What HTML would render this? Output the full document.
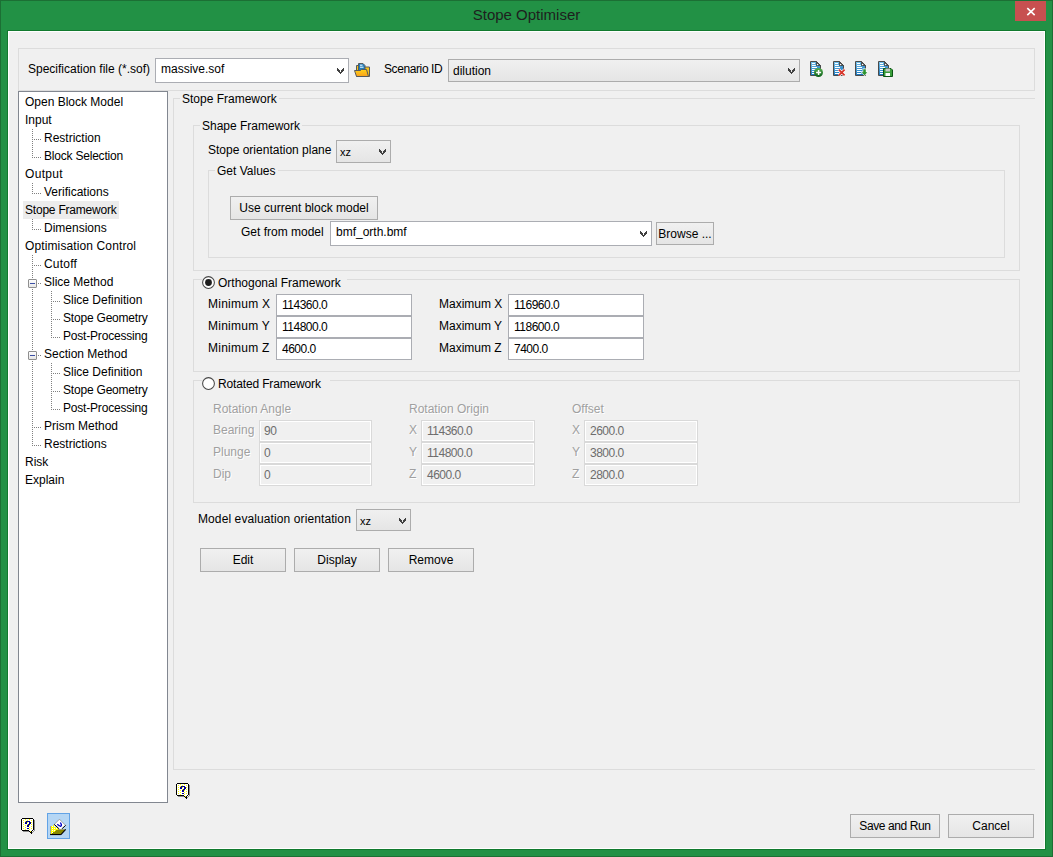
<!DOCTYPE html><html><head><meta charset="utf-8"><style>
html,body{margin:0;padding:0}
body{width:1053px;height:857px;position:relative;overflow:hidden;background:#229145;font-family:"Liberation Sans",sans-serif;font-size:12px;color:#000}
.abs{position:absolute;box-sizing:border-box}
.t{position:absolute;white-space:nowrap;font-size:12px;line-height:14px;height:14px}
.g{color:#a0a0a0;text-shadow:1px 1px 0 #fff}
.gv{color:#6d6d6d}
.num{letter-spacing:-0.5px}
.gb{position:absolute;box-sizing:border-box;border:1px solid #dcdcdc}
.gap{position:absolute;background:#f0f0f0}
.edit{background:#fff;border:1px solid #abadb3}
.edit.dis{background:#f0f0f0;border:1px solid #d9d9d9;box-shadow:inset 0 0 0 1px #fff}
.btn{border:1px solid #acacac;background:linear-gradient(#f0f0f0,#e5e5e5)}
.dv{position:absolute;width:1px;background:repeating-linear-gradient(to bottom,#808080 0 1px,transparent 1px 2px)}
.dh{position:absolute;height:1px;background:repeating-linear-gradient(to right,#808080 0 1px,transparent 1px 2px)}
</style></head><body>
<div class="abs" style="left:0;top:0;width:1053px;height:857px;border:1px solid #1c6f34"></div>
<div class="t" style="left:0;top:6px;width:1053px;text-align:center;font-size:15px;line-height:18px;height:18px;color:#1e1e1e">Stope Optimiser</div>
<div class="abs" style="left:1015px;top:1px;width:31px;height:20px;background:#c75050"></div>
<svg class="abs" style="left:1026px;top:7px" width="10" height="9" viewBox="0 0 10 9"><path d="M1.3 1.1 L8.7 8.1 M8.7 1.1 L1.3 8.1" stroke="#fff" stroke-width="1.6"/></svg>
<div class="abs" style="left:7px;top:30px;width:1039px;height:820px;border:1px solid #117a2e"></div>
<div class="abs" style="left:8px;top:31px;width:1037px;height:818px;border:1px solid #fff;background:#f0f0f0"></div>
<div class="gb" style="left:18px;top:48px;width:1017px;height:43px;"></div>
<div class="t " style="left:28px;top:62px;">Specification file (*.sof)</div>
<div class="abs edit" style="left:155px;top:58px;width:194px;height:25px"></div>
<div class="t " style="left:161px;top:62px;">massive.sof</div>
<svg class="abs" style="left:337px;top:68px" width="7" height="6" viewBox="0 0 7 6" shape-rendering="crispEdges"><g fill="#404040"><rect x="0" y="0" width="1" height="1"/><rect x="6" y="0" width="1" height="1"/><rect x="0" y="1" width="2" height="1"/><rect x="5" y="1" width="2" height="1"/><rect x="0" y="2" width="3" height="1"/><rect x="4" y="2" width="3" height="1"/><rect x="1" y="3" width="2" height="1"/><rect x="4" y="3" width="2" height="1"/><rect x="2" y="4" width="3" height="1"/><rect x="3" y="5" width="1" height="1"/></g></svg>
<svg class="abs" style="left:354px;top:62px" width="17" height="16" viewBox="0 0 17 16">
<defs><linearGradient id="fy" x1="0" y1="0" x2="0" y2="1"><stop offset="0" stop-color="#ffd21c"/><stop offset="1" stop-color="#f9a11b"/></linearGradient></defs>
<path d="M2.5 3.5 H5 V5 H15.5 V14.5 H2.5 Z" fill="#f5c21b" stroke="#565a5e" stroke-width="1"/>
<path d="M4.5 1.5 H9 L11 3.5 V8.5 H4.5 Z" fill="#1f7fc0" stroke="#565a5e" stroke-width="1"/>
<path d="M6 3.2 H8.5 M6 5.2 H9.5" stroke="#fff" stroke-width="1"/>
<path d="M0.5 8.5 H6.5 L7.5 7.5 H12.5 L14.5 14.5 H2.5 Z" fill="url(#fy)" stroke="#565a5e" stroke-width="1" stroke-linejoin="round"/>
</svg>
<div class="t " style="left:384px;top:62px;letter-spacing:-0.4px">Scenario ID</div>
<div class="abs btn" style="left:448px;top:59px;width:352px;height:23px"></div>
<div class="t " style="left:453px;top:64px;">dilution</div>
<svg class="abs" style="left:788px;top:68px" width="7" height="6" viewBox="0 0 7 6" shape-rendering="crispEdges"><g fill="#404040"><rect x="0" y="0" width="1" height="1"/><rect x="6" y="0" width="1" height="1"/><rect x="0" y="1" width="2" height="1"/><rect x="5" y="1" width="2" height="1"/><rect x="0" y="2" width="3" height="1"/><rect x="4" y="2" width="3" height="1"/><rect x="1" y="3" width="2" height="1"/><rect x="4" y="3" width="2" height="1"/><rect x="2" y="4" width="3" height="1"/><rect x="3" y="5" width="1" height="1"/></g></svg>
<svg class="abs" style="left:810px;top:61px" width="16" height="17" viewBox="0 0 16 17">
<defs><linearGradient id="db810" x1="0" y1="0" x2="0.3" y2="1"><stop offset="0" stop-color="#7cc6ee"/><stop offset="1" stop-color="#1675bd"/></linearGradient>
<linearGradient id="gc810" x1="0" y1="0" x2="0" y2="1"><stop offset="0" stop-color="#58b04f"/><stop offset="1" stop-color="#0b5e1a"/></linearGradient></defs>
<path d="M0.5 0.5 H6.5 L10.5 4.5 V14.5 H0.5 Z" fill="url(#db810)" stroke="#4a4a4a" stroke-width="1"/>
<path d="M6.5 0.5 L10.5 4.5 H6.5 Z" fill="#454545" stroke="#454545" stroke-width="0.8" stroke-linejoin="round"/>
<circle cx="7.6" cy="3.4" r="0.75" fill="#fff"/>
<path d="M2 2.5 H5 M2 4.5 H5.8 M2 6.5 H7 M2 8.5 H7 M2 10.5 H6.5 M2 12.5 H6.5" stroke="#fff" stroke-width="1"/><circle cx="8.5" cy="11.5" r="4.5" fill="url(#gc810)"/><path d="M8.6 9 V14 M6.1 11.5 H11.1" stroke="#fff" stroke-width="1.5"/></svg>
<svg class="abs" style="left:833px;top:61px" width="16" height="17" viewBox="0 0 16 17">
<defs><linearGradient id="db833" x1="0" y1="0" x2="0.3" y2="1"><stop offset="0" stop-color="#7cc6ee"/><stop offset="1" stop-color="#1675bd"/></linearGradient>
<linearGradient id="gc833" x1="0" y1="0" x2="0" y2="1"><stop offset="0" stop-color="#58b04f"/><stop offset="1" stop-color="#0b5e1a"/></linearGradient></defs>
<path d="M0.5 0.5 H6.5 L10.5 4.5 V14.5 H0.5 Z" fill="url(#db833)" stroke="#4a4a4a" stroke-width="1"/>
<path d="M6.5 0.5 L10.5 4.5 H6.5 Z" fill="#454545" stroke="#454545" stroke-width="0.8" stroke-linejoin="round"/>
<circle cx="7.6" cy="3.4" r="0.75" fill="#fff"/>
<path d="M2 2.5 H5 M2 4.5 H5.8 M2 6.5 H7 M2 8.5 H7 M2 10.5 H6.5 M2 12.5 H6.5" stroke="#fff" stroke-width="1"/><path d="M5.8 8.6 L11.6 14.4 M11.6 8.6 L5.8 14.4" stroke="#fff" stroke-width="3"/><path d="M5.8 8.6 L11.6 14.4 M11.6 8.6 L5.8 14.4" stroke="#d8352a" stroke-width="1.8"/></svg>
<svg class="abs" style="left:855px;top:61px" width="16" height="17" viewBox="0 0 16 17">
<defs><linearGradient id="db855" x1="0" y1="0" x2="0.3" y2="1"><stop offset="0" stop-color="#7cc6ee"/><stop offset="1" stop-color="#1675bd"/></linearGradient>
<linearGradient id="gc855" x1="0" y1="0" x2="0" y2="1"><stop offset="0" stop-color="#58b04f"/><stop offset="1" stop-color="#0b5e1a"/></linearGradient></defs>
<path d="M0.5 0.5 H6.5 L10.5 4.5 V14.5 H0.5 Z" fill="url(#db855)" stroke="#4a4a4a" stroke-width="1"/>
<path d="M6.5 0.5 L10.5 4.5 H6.5 Z" fill="#454545" stroke="#454545" stroke-width="0.8" stroke-linejoin="round"/>
<circle cx="7.6" cy="3.4" r="0.75" fill="#fff"/>
<path d="M2 2.5 H5 M2 4.5 H5.8 M2 6.5 H7 M2 8.5 H7 M2 10.5 H6.5 M2 12.5 H6.5" stroke="#fff" stroke-width="1"/><path d="M7.6 7.6 H11.4 V10.6 H13.6 L9.5 15 L5.4 10.6 H7.6 Z" fill="#fff"/><path d="M8.2 8.2 H10.8 V11.2 H12.4 L9.5 14.3 L6.6 11.2 H8.2 Z" fill="#2b932e"/></svg>
<svg class="abs" style="left:878px;top:61px" width="16" height="17" viewBox="0 0 16 17">
<defs><linearGradient id="db878" x1="0" y1="0" x2="0.3" y2="1"><stop offset="0" stop-color="#7cc6ee"/><stop offset="1" stop-color="#1675bd"/></linearGradient>
<linearGradient id="gc878" x1="0" y1="0" x2="0" y2="1"><stop offset="0" stop-color="#58b04f"/><stop offset="1" stop-color="#0b5e1a"/></linearGradient></defs>
<path d="M0.5 0.5 H6.5 L10.5 4.5 V14.5 H0.5 Z" fill="url(#db878)" stroke="#4a4a4a" stroke-width="1"/>
<path d="M6.5 0.5 L10.5 4.5 H6.5 Z" fill="#454545" stroke="#454545" stroke-width="0.8" stroke-linejoin="round"/>
<circle cx="7.6" cy="3.4" r="0.75" fill="#fff"/>
<path d="M2 2.5 H5 M2 4.5 H5.8 M2 6.5 H7 M2 8.5 H7 M2 10.5 H6.5 M2 12.5 H6.5" stroke="#fff" stroke-width="1"/><path d="M5.5 7.5 H13 L14.5 9 V15.5 H5.5 Z" fill="#3a9e3a" stroke="#0b5414" stroke-width="1"/><rect x="7.5" y="7.5" width="4.5" height="3" fill="#c8c8c8"/><rect x="7.5" y="12" width="4.5" height="3" fill="#fff"/></svg>
<div class="abs" style="left:18px;top:91px;width:150px;height:712px;border:1px solid #828790;background:#fff"></div>
<div class="abs" style="left:23px;top:201px;width:96px;height:18px;background:#ececec"></div>
<div class="t " style="left:25px;top:95px;">Open Block Model</div>
<div class="t " style="left:25px;top:113px;">Input</div>
<div class="t " style="left:44px;top:131px;">Restriction</div>
<div class="t " style="left:44px;top:149px;letter-spacing:-0.21px">Block Selection</div>
<div class="t " style="left:25px;top:167px;letter-spacing:0.33px">Output</div>
<div class="t " style="left:44px;top:185px;">Verifications</div>
<div class="t " style="left:25px;top:203px;letter-spacing:-0.21px">Stope Framework</div>
<div class="t " style="left:44px;top:221px;">Dimensions</div>
<div class="t " style="left:25px;top:239px;letter-spacing:0.12px">Optimisation Control</div>
<div class="t " style="left:44px;top:257px;letter-spacing:0.2px">Cutoff</div>
<div class="t " style="left:44px;top:275px;">Slice Method</div>
<div class="t " style="left:63px;top:293px;">Slice Definition</div>
<div class="t " style="left:63px;top:311px;letter-spacing:-0.2px">Stope Geometry</div>
<div class="t " style="left:63px;top:329px;letter-spacing:-0.19px">Post-Processing</div>
<div class="t " style="left:44px;top:347px;">Section Method</div>
<div class="t " style="left:63px;top:365px;">Slice Definition</div>
<div class="t " style="left:63px;top:383px;letter-spacing:-0.2px">Stope Geometry</div>
<div class="t " style="left:63px;top:401px;letter-spacing:-0.19px">Post-Processing</div>
<div class="t " style="left:44px;top:419px;">Prism Method</div>
<div class="t " style="left:44px;top:437px;">Restrictions</div>
<div class="t " style="left:25px;top:455px;">Risk</div>
<div class="t " style="left:25px;top:473px;">Explain</div>
<div class="dv" style="left:32px;top:129px;height:29px"></div>
<div class="dh" style="left:32px;top:139px;width:9px"></div>
<div class="dh" style="left:32px;top:157px;width:9px"></div>
<div class="dv" style="left:32px;top:183px;height:11px"></div>
<div class="dh" style="left:32px;top:193px;width:9px"></div>
<div class="dv" style="left:32px;top:219px;height:11px"></div>
<div class="dh" style="left:32px;top:229px;width:9px"></div>
<div class="dv" style="left:32px;top:255px;height:191px"></div>
<div class="dh" style="left:32px;top:265px;width:9px"></div>
<div class="dh" style="left:32px;top:283px;width:9px"></div>
<div class="dh" style="left:32px;top:355px;width:9px"></div>
<div class="dh" style="left:32px;top:427px;width:9px"></div>
<div class="dh" style="left:32px;top:445px;width:9px"></div>
<div class="dv" style="left:51px;top:291px;height:47px"></div>
<div class="dh" style="left:51px;top:301px;width:9px"></div>
<div class="dh" style="left:51px;top:319px;width:9px"></div>
<div class="dh" style="left:51px;top:337px;width:9px"></div>
<div class="dv" style="left:51px;top:363px;height:47px"></div>
<div class="dh" style="left:51px;top:373px;width:9px"></div>
<div class="dh" style="left:51px;top:391px;width:9px"></div>
<div class="dh" style="left:51px;top:409px;width:9px"></div>
<div class="abs" style="left:28px;top:279px;width:9px;height:9px;border:1px solid #8f8f8f;border-radius:1px;background:linear-gradient(#fdfdfd,#e6e6e6)"></div>
<div class="abs" style="left:30px;top:283px;width:5px;height:1px;background:#3b4fa5"></div>
<div class="abs" style="left:28px;top:351px;width:9px;height:9px;border:1px solid #8f8f8f;border-radius:1px;background:linear-gradient(#fdfdfd,#e6e6e6)"></div>
<div class="abs" style="left:30px;top:355px;width:5px;height:1px;background:#3b4fa5"></div>
<div class="gb" style="left:173px;top:98px;width:862px;height:672px;border-right:none;"></div>
<div class="gap" style="left:180px;top:96px;width:99px;height:5px"></div>
<div class="t " style="left:182px;top:92px;">Stope Framework</div>
<div class="gb" style="left:193px;top:125px;width:827px;height:146px;"></div>
<div class="gap" style="left:200px;top:123px;width:102px;height:5px"></div>
<div class="t " style="left:202px;top:119px;">Shape Framework</div>
<div class="t " style="left:208px;top:143px;">Stope orientation plane</div>
<div class="abs btn" style="left:336px;top:140px;width:55px;height:23px"></div>
<div class="t " style="left:340px;top:145px;"><span style="font-size:11px">xz</span></div>
<svg class="abs" style="left:379px;top:149px" width="7" height="6" viewBox="0 0 7 6" shape-rendering="crispEdges"><g fill="#404040"><rect x="0" y="0" width="1" height="1"/><rect x="6" y="0" width="1" height="1"/><rect x="0" y="1" width="2" height="1"/><rect x="5" y="1" width="2" height="1"/><rect x="0" y="2" width="3" height="1"/><rect x="4" y="2" width="3" height="1"/><rect x="1" y="3" width="2" height="1"/><rect x="4" y="3" width="2" height="1"/><rect x="2" y="4" width="3" height="1"/><rect x="3" y="5" width="1" height="1"/></g></svg>
<div class="gb" style="left:208px;top:170px;width:797px;height:88px;"></div>
<div class="gap" style="left:215px;top:168px;width:63px;height:5px"></div>
<div class="t " style="left:217px;top:164px;">Get Values</div>
<div class="abs btn" style="left:230px;top:196px;width:148px;height:24px"></div>
<div class="t" style="left:230px;top:201px;width:148px;text-align:center">Use current block model</div>
<div class="t " style="left:241px;top:225px;">Get from model</div>
<div class="abs edit" style="left:330px;top:221px;width:322px;height:25px"></div>
<div class="t " style="left:336px;top:225px;">bmf_orth.bmf</div>
<svg class="abs" style="left:640px;top:231px" width="7" height="6" viewBox="0 0 7 6" shape-rendering="crispEdges"><g fill="#404040"><rect x="0" y="0" width="1" height="1"/><rect x="6" y="0" width="1" height="1"/><rect x="0" y="1" width="2" height="1"/><rect x="5" y="1" width="2" height="1"/><rect x="0" y="2" width="3" height="1"/><rect x="4" y="2" width="3" height="1"/><rect x="1" y="3" width="2" height="1"/><rect x="4" y="3" width="2" height="1"/><rect x="2" y="4" width="3" height="1"/><rect x="3" y="5" width="1" height="1"/></g></svg>
<div class="abs btn" style="left:656px;top:222px;width:58px;height:23px"></div>
<div class="t" style="left:656px;top:227px;width:58px;text-align:center">Browse ...</div>
<div class="gb" style="left:193px;top:279px;width:827px;height:93px;"></div>
<div class="gap" style="left:202px;top:277px;width:145px;height:5px"></div>
<svg class="abs" style="left:202px;top:276px" width="13" height="13" viewBox="0 0 13 13"><circle cx="6.5" cy="6.5" r="5.9" fill="#fff" stroke="#464646" stroke-width="1.05"/><circle cx="6.5" cy="6.5" r="3.4" fill="#1e1e1e"/></svg>
<div class="t " style="left:218px;top:276px;">Orthogonal Framework</div>
<div class="t " style="left:208px;top:297px;letter-spacing:0.25px">Minimum X</div>
<div class="abs edit" style="left:276px;top:294px;width:136px;height:22px"></div>
<div class="t num" style="left:282px;top:298px;">114360.0</div>
<div class="t " style="left:439px;top:297px;">Maximum X</div>
<div class="abs edit" style="left:508px;top:294px;width:136px;height:22px"></div>
<div class="t num" style="left:514px;top:298px;">116960.0</div>
<div class="t " style="left:208px;top:319px;letter-spacing:0.25px">Minimum Y</div>
<div class="abs edit" style="left:276px;top:316px;width:136px;height:22px"></div>
<div class="t num" style="left:282px;top:320px;">114800.0</div>
<div class="t " style="left:439px;top:319px;">Maximum Y</div>
<div class="abs edit" style="left:508px;top:316px;width:136px;height:22px"></div>
<div class="t num" style="left:514px;top:320px;">118600.0</div>
<div class="t " style="left:208px;top:341px;letter-spacing:0.25px">Minimum Z</div>
<div class="abs edit" style="left:276px;top:338px;width:136px;height:22px"></div>
<div class="t num" style="left:282px;top:342px;">4600.0</div>
<div class="t " style="left:439px;top:341px;">Maximum Z</div>
<div class="abs edit" style="left:508px;top:338px;width:136px;height:22px"></div>
<div class="t num" style="left:514px;top:342px;">7400.0</div>
<div class="gb" style="left:193px;top:380px;width:827px;height:123px;"></div>
<div class="gap" style="left:202px;top:378px;width:128px;height:5px"></div>
<svg class="abs" style="left:202px;top:377px" width="13" height="13" viewBox="0 0 13 13"><circle cx="6.5" cy="6.5" r="5.9" fill="#fff" stroke="#464646" stroke-width="1.05"/></svg>
<div class="t " style="left:218px;top:377px;letter-spacing:-0.15px">Rotated Framework</div>
<div class="t g" style="left:213px;top:402px;">Rotation Angle</div>
<div class="t g" style="left:409px;top:402px;">Rotation Origin</div>
<div class="t g" style="left:572px;top:402px;">Offset</div>
<div class="t g" style="left:213px;top:423px;">Bearing</div>
<div class="abs edit dis" style="left:259px;top:420px;width:113px;height:22px"></div>
<div class="t gv num" style="left:264px;top:424px;">90</div>
<div class="t g" style="left:409px;top:423px;">X</div>
<div class="abs edit dis" style="left:421px;top:420px;width:114px;height:22px"></div>
<div class="t gv num" style="left:427px;top:424px;">114360.0</div>
<div class="t g" style="left:572px;top:423px;">X</div>
<div class="abs edit dis" style="left:584px;top:420px;width:114px;height:22px"></div>
<div class="t gv num" style="left:590px;top:424px;">2600.0</div>
<div class="t g" style="left:213px;top:445px;">Plunge</div>
<div class="abs edit dis" style="left:259px;top:442px;width:113px;height:22px"></div>
<div class="t gv num" style="left:264px;top:446px;">0</div>
<div class="t g" style="left:409px;top:445px;">Y</div>
<div class="abs edit dis" style="left:421px;top:442px;width:114px;height:22px"></div>
<div class="t gv num" style="left:427px;top:446px;">114800.0</div>
<div class="t g" style="left:572px;top:445px;">Y</div>
<div class="abs edit dis" style="left:584px;top:442px;width:114px;height:22px"></div>
<div class="t gv num" style="left:590px;top:446px;">3800.0</div>
<div class="t g" style="left:213px;top:467px;">Dip</div>
<div class="abs edit dis" style="left:259px;top:464px;width:113px;height:22px"></div>
<div class="t gv num" style="left:264px;top:468px;">0</div>
<div class="t g" style="left:409px;top:467px;">Z</div>
<div class="abs edit dis" style="left:421px;top:464px;width:114px;height:22px"></div>
<div class="t gv num" style="left:427px;top:468px;">4600.0</div>
<div class="t g" style="left:572px;top:467px;">Z</div>
<div class="abs edit dis" style="left:584px;top:464px;width:114px;height:22px"></div>
<div class="t gv num" style="left:590px;top:468px;">2800.0</div>
<div class="t " style="left:198px;top:512px;letter-spacing:0.1px">Model evaluation orientation</div>
<div class="abs btn" style="left:356px;top:509px;width:55px;height:22px"></div>
<div class="t " style="left:360px;top:514px;"><span style="font-size:11px">xz</span></div>
<svg class="abs" style="left:399px;top:518px" width="7" height="6" viewBox="0 0 7 6" shape-rendering="crispEdges"><g fill="#404040"><rect x="0" y="0" width="1" height="1"/><rect x="6" y="0" width="1" height="1"/><rect x="0" y="1" width="2" height="1"/><rect x="5" y="1" width="2" height="1"/><rect x="0" y="2" width="3" height="1"/><rect x="4" y="2" width="3" height="1"/><rect x="1" y="3" width="2" height="1"/><rect x="4" y="3" width="2" height="1"/><rect x="2" y="4" width="3" height="1"/><rect x="3" y="5" width="1" height="1"/></g></svg>
<div class="abs btn" style="left:200px;top:548px;width:86px;height:24px"></div>
<div class="t" style="left:200px;top:553px;width:86px;text-align:center">Edit</div>
<div class="abs btn" style="left:294px;top:548px;width:86px;height:24px"></div>
<div class="t" style="left:294px;top:553px;width:86px;text-align:center">Display</div>
<div class="abs btn" style="left:388px;top:548px;width:86px;height:24px"></div>
<div class="t" style="left:388px;top:553px;width:86px;text-align:center">Remove</div>
<svg class="abs" style="left:176px;top:783px" width="14" height="17" viewBox="0 0 14 17" shape-rendering="crispEdges"><rect x="1" y="1" width="1" height="1" fill="#fff"/><rect x="2" y="1" width="1" height="1" fill="#fff"/><rect x="3" y="1" width="1" height="1" fill="#fff"/><rect x="4" y="1" width="1" height="1" fill="#ffff00"/><rect x="5" y="1" width="1" height="1" fill="#fff"/><rect x="6" y="1" width="1" height="1" fill="#fff"/><rect x="7" y="1" width="1" height="1" fill="#fff"/><rect x="8" y="1" width="1" height="1" fill="#ffff00"/><rect x="9" y="1" width="1" height="1" fill="#fff"/><rect x="10" y="1" width="1" height="1" fill="#fff"/><rect x="11" y="1" width="1" height="1" fill="#fff"/><rect x="1" y="2" width="1" height="1" fill="#fff"/><rect x="2" y="2" width="1" height="1" fill="#ffff00"/><rect x="3" y="2" width="1" height="1" fill="#fff"/><rect x="4" y="2" width="1" height="1" fill="#fff"/><rect x="5" y="2" width="1" height="1" fill="#fff"/><rect x="6" y="2" width="1" height="1" fill="#ffff00"/><rect x="7" y="2" width="1" height="1" fill="#fff"/><rect x="8" y="2" width="1" height="1" fill="#fff"/><rect x="9" y="2" width="1" height="1" fill="#fff"/><rect x="10" y="2" width="1" height="1" fill="#ffff00"/><rect x="11" y="2" width="1" height="1" fill="#fff"/><rect x="1" y="3" width="1" height="1" fill="#fff"/><rect x="2" y="3" width="1" height="1" fill="#fff"/><rect x="3" y="3" width="1" height="1" fill="#fff"/><rect x="4" y="3" width="1" height="1" fill="#ffff00"/><rect x="5" y="3" width="1" height="1" fill="#00008c"/><rect x="6" y="3" width="1" height="1" fill="#00008c"/><rect x="7" y="3" width="1" height="1" fill="#00008c"/><rect x="8" y="3" width="1" height="1" fill="#00008c"/><rect x="9" y="3" width="1" height="1" fill="#fff"/><rect x="10" y="3" width="1" height="1" fill="#fff"/><rect x="11" y="3" width="1" height="1" fill="#fff"/><rect x="1" y="4" width="1" height="1" fill="#fff"/><rect x="2" y="4" width="1" height="1" fill="#ffff00"/><rect x="3" y="4" width="1" height="1" fill="#fff"/><rect x="4" y="4" width="1" height="1" fill="#00008c"/><rect x="5" y="4" width="1" height="1" fill="#00008c"/><rect x="6" y="4" width="1" height="1" fill="#ffff00"/><rect x="7" y="4" width="1" height="1" fill="#fff"/><rect x="8" y="4" width="1" height="1" fill="#00008c"/><rect x="9" y="4" width="1" height="1" fill="#00008c"/><rect x="10" y="4" width="1" height="1" fill="#ffff00"/><rect x="11" y="4" width="1" height="1" fill="#fff"/><rect x="1" y="5" width="1" height="1" fill="#fff"/><rect x="2" y="5" width="1" height="1" fill="#fff"/><rect x="3" y="5" width="1" height="1" fill="#fff"/><rect x="4" y="5" width="1" height="1" fill="#00008c"/><rect x="5" y="5" width="1" height="1" fill="#00008c"/><rect x="6" y="5" width="1" height="1" fill="#fff"/><rect x="7" y="5" width="1" height="1" fill="#fff"/><rect x="8" y="5" width="1" height="1" fill="#00008c"/><rect x="9" y="5" width="1" height="1" fill="#00008c"/><rect x="10" y="5" width="1" height="1" fill="#fff"/><rect x="11" y="5" width="1" height="1" fill="#fff"/><rect x="1" y="6" width="1" height="1" fill="#fff"/><rect x="2" y="6" width="1" height="1" fill="#ffff00"/><rect x="3" y="6" width="1" height="1" fill="#fff"/><rect x="4" y="6" width="1" height="1" fill="#fff"/><rect x="5" y="6" width="1" height="1" fill="#fff"/><rect x="6" y="6" width="1" height="1" fill="#ffff00"/><rect x="7" y="6" width="1" height="1" fill="#00008c"/><rect x="8" y="6" width="1" height="1" fill="#00008c"/><rect x="9" y="6" width="1" height="1" fill="#fff"/><rect x="10" y="6" width="1" height="1" fill="#ffff00"/><rect x="11" y="6" width="1" height="1" fill="#fff"/><rect x="1" y="7" width="1" height="1" fill="#fff"/><rect x="2" y="7" width="1" height="1" fill="#fff"/><rect x="3" y="7" width="1" height="1" fill="#fff"/><rect x="4" y="7" width="1" height="1" fill="#ffff00"/><rect x="5" y="7" width="1" height="1" fill="#fff"/><rect x="6" y="7" width="1" height="1" fill="#00008c"/><rect x="7" y="7" width="1" height="1" fill="#00008c"/><rect x="8" y="7" width="1" height="1" fill="#ffff00"/><rect x="9" y="7" width="1" height="1" fill="#fff"/><rect x="10" y="7" width="1" height="1" fill="#fff"/><rect x="11" y="7" width="1" height="1" fill="#fff"/><rect x="1" y="8" width="1" height="1" fill="#fff"/><rect x="2" y="8" width="1" height="1" fill="#ffff00"/><rect x="3" y="8" width="1" height="1" fill="#fff"/><rect x="4" y="8" width="1" height="1" fill="#fff"/><rect x="5" y="8" width="1" height="1" fill="#fff"/><rect x="6" y="8" width="1" height="1" fill="#00008c"/><rect x="7" y="8" width="1" height="1" fill="#00008c"/><rect x="8" y="8" width="1" height="1" fill="#fff"/><rect x="9" y="8" width="1" height="1" fill="#fff"/><rect x="10" y="8" width="1" height="1" fill="#ffff00"/><rect x="11" y="8" width="1" height="1" fill="#fff"/><rect x="1" y="9" width="1" height="1" fill="#fff"/><rect x="2" y="9" width="1" height="1" fill="#fff"/><rect x="3" y="9" width="1" height="1" fill="#fff"/><rect x="4" y="9" width="1" height="1" fill="#ffff00"/><rect x="5" y="9" width="1" height="1" fill="#fff"/><rect x="6" y="9" width="1" height="1" fill="#fff"/><rect x="7" y="9" width="1" height="1" fill="#fff"/><rect x="8" y="9" width="1" height="1" fill="#ffff00"/><rect x="9" y="9" width="1" height="1" fill="#fff"/><rect x="10" y="9" width="1" height="1" fill="#fff"/><rect x="11" y="9" width="1" height="1" fill="#fff"/><rect x="1" y="10" width="1" height="1" fill="#fff"/><rect x="2" y="10" width="1" height="1" fill="#ffff00"/><rect x="3" y="10" width="1" height="1" fill="#fff"/><rect x="4" y="10" width="1" height="1" fill="#fff"/><rect x="5" y="10" width="1" height="1" fill="#fff"/><rect x="6" y="10" width="1" height="1" fill="#00008c"/><rect x="7" y="10" width="1" height="1" fill="#00008c"/><rect x="8" y="10" width="1" height="1" fill="#fff"/><rect x="9" y="10" width="1" height="1" fill="#fff"/><rect x="10" y="10" width="1" height="1" fill="#ffff00"/><rect x="11" y="10" width="1" height="1" fill="#fff"/><rect x="1" y="11" width="1" height="1" fill="#fff"/><rect x="2" y="11" width="1" height="1" fill="#fff"/><rect x="3" y="11" width="1" height="1" fill="#fff"/><rect x="4" y="11" width="1" height="1" fill="#ffff00"/><rect x="5" y="11" width="1" height="1" fill="#fff"/><rect x="6" y="11" width="1" height="1" fill="#fff"/><rect x="7" y="11" width="1" height="1" fill="#fff"/><rect x="8" y="11" width="1" height="1" fill="#ffff00"/><rect x="9" y="11" width="1" height="1" fill="#fff"/><rect x="10" y="11" width="1" height="1" fill="#fff"/><rect x="11" y="11" width="1" height="1" fill="#fff"/><rect x="8" y="12" width="1" height="1" fill="#fff"/><rect x="9" y="12" width="1" height="1" fill="#fff"/><rect x="10" y="12" width="1" height="1" fill="#fff"/><rect x="9" y="13" width="1" height="1" fill="#ffff00"/><rect x="13" y="2" width="1" height="1" fill="#8c8c8c"/><rect x="13" y="3" width="1" height="1" fill="#8c8c8c"/><rect x="13" y="4" width="1" height="1" fill="#8c8c8c"/><rect x="13" y="5" width="1" height="1" fill="#8c8c8c"/><rect x="13" y="6" width="1" height="1" fill="#8c8c8c"/><rect x="13" y="7" width="1" height="1" fill="#8c8c8c"/><rect x="13" y="8" width="1" height="1" fill="#8c8c8c"/><rect x="13" y="9" width="1" height="1" fill="#8c8c8c"/><rect x="13" y="10" width="1" height="1" fill="#8c8c8c"/><rect x="13" y="11" width="1" height="1" fill="#8c8c8c"/><rect x="13" y="12" width="1" height="1" fill="#8c8c8c"/><rect x="2" y="13" width="1" height="1" fill="#8c8c8c"/><rect x="3" y="13" width="1" height="1" fill="#8c8c8c"/><rect x="4" y="13" width="1" height="1" fill="#8c8c8c"/><rect x="5" y="13" width="1" height="1" fill="#8c8c8c"/><rect x="6" y="13" width="1" height="1" fill="#8c8c8c"/><rect x="7" y="13" width="1" height="1" fill="#8c8c8c"/><rect x="11" y="14" width="1" height="1" fill="#8c8c8c"/><rect x="12" y="13" width="1" height="1" fill="#8c8c8c"/><rect x="1" y="0" width="1" height="1" fill="#000"/><rect x="2" y="0" width="1" height="1" fill="#000"/><rect x="3" y="0" width="1" height="1" fill="#000"/><rect x="4" y="0" width="1" height="1" fill="#000"/><rect x="5" y="0" width="1" height="1" fill="#000"/><rect x="6" y="0" width="1" height="1" fill="#000"/><rect x="7" y="0" width="1" height="1" fill="#000"/><rect x="8" y="0" width="1" height="1" fill="#000"/><rect x="9" y="0" width="1" height="1" fill="#000"/><rect x="10" y="0" width="1" height="1" fill="#000"/><rect x="11" y="0" width="1" height="1" fill="#000"/><rect x="0" y="1" width="1" height="1" fill="#000"/><rect x="12" y="1" width="1" height="1" fill="#000"/><rect x="0" y="2" width="1" height="1" fill="#000"/><rect x="12" y="2" width="1" height="1" fill="#000"/><rect x="0" y="3" width="1" height="1" fill="#000"/><rect x="12" y="3" width="1" height="1" fill="#000"/><rect x="0" y="4" width="1" height="1" fill="#000"/><rect x="12" y="4" width="1" height="1" fill="#000"/><rect x="0" y="5" width="1" height="1" fill="#000"/><rect x="12" y="5" width="1" height="1" fill="#000"/><rect x="0" y="6" width="1" height="1" fill="#000"/><rect x="12" y="6" width="1" height="1" fill="#000"/><rect x="0" y="7" width="1" height="1" fill="#000"/><rect x="12" y="7" width="1" height="1" fill="#000"/><rect x="0" y="8" width="1" height="1" fill="#000"/><rect x="12" y="8" width="1" height="1" fill="#000"/><rect x="0" y="9" width="1" height="1" fill="#000"/><rect x="12" y="9" width="1" height="1" fill="#000"/><rect x="0" y="10" width="1" height="1" fill="#000"/><rect x="12" y="10" width="1" height="1" fill="#000"/><rect x="0" y="11" width="1" height="1" fill="#000"/><rect x="12" y="11" width="1" height="1" fill="#000"/><rect x="1" y="12" width="1" height="1" fill="#000"/><rect x="2" y="12" width="1" height="1" fill="#000"/><rect x="3" y="12" width="1" height="1" fill="#000"/><rect x="4" y="12" width="1" height="1" fill="#000"/><rect x="5" y="12" width="1" height="1" fill="#000"/><rect x="6" y="12" width="1" height="1" fill="#000"/><rect x="7" y="12" width="1" height="1" fill="#000"/><rect x="11" y="12" width="1" height="1" fill="#000"/><rect x="8" y="13" width="1" height="1" fill="#000"/><rect x="10" y="13" width="1" height="1" fill="#000"/><rect x="9" y="14" width="1" height="1" fill="#000"/><rect x="10" y="14" width="1" height="1" fill="#000"/><rect x="10" y="15" width="1" height="1" fill="#000"/></svg>
<svg class="abs" style="left:21px;top:818px" width="14" height="17" viewBox="0 0 14 17" shape-rendering="crispEdges"><rect x="1" y="1" width="1" height="1" fill="#fff"/><rect x="2" y="1" width="1" height="1" fill="#fff"/><rect x="3" y="1" width="1" height="1" fill="#fff"/><rect x="4" y="1" width="1" height="1" fill="#ffff00"/><rect x="5" y="1" width="1" height="1" fill="#fff"/><rect x="6" y="1" width="1" height="1" fill="#fff"/><rect x="7" y="1" width="1" height="1" fill="#fff"/><rect x="8" y="1" width="1" height="1" fill="#ffff00"/><rect x="9" y="1" width="1" height="1" fill="#fff"/><rect x="10" y="1" width="1" height="1" fill="#fff"/><rect x="11" y="1" width="1" height="1" fill="#fff"/><rect x="1" y="2" width="1" height="1" fill="#fff"/><rect x="2" y="2" width="1" height="1" fill="#ffff00"/><rect x="3" y="2" width="1" height="1" fill="#fff"/><rect x="4" y="2" width="1" height="1" fill="#fff"/><rect x="5" y="2" width="1" height="1" fill="#fff"/><rect x="6" y="2" width="1" height="1" fill="#ffff00"/><rect x="7" y="2" width="1" height="1" fill="#fff"/><rect x="8" y="2" width="1" height="1" fill="#fff"/><rect x="9" y="2" width="1" height="1" fill="#fff"/><rect x="10" y="2" width="1" height="1" fill="#ffff00"/><rect x="11" y="2" width="1" height="1" fill="#fff"/><rect x="1" y="3" width="1" height="1" fill="#fff"/><rect x="2" y="3" width="1" height="1" fill="#fff"/><rect x="3" y="3" width="1" height="1" fill="#fff"/><rect x="4" y="3" width="1" height="1" fill="#ffff00"/><rect x="5" y="3" width="1" height="1" fill="#00008c"/><rect x="6" y="3" width="1" height="1" fill="#00008c"/><rect x="7" y="3" width="1" height="1" fill="#00008c"/><rect x="8" y="3" width="1" height="1" fill="#00008c"/><rect x="9" y="3" width="1" height="1" fill="#fff"/><rect x="10" y="3" width="1" height="1" fill="#fff"/><rect x="11" y="3" width="1" height="1" fill="#fff"/><rect x="1" y="4" width="1" height="1" fill="#fff"/><rect x="2" y="4" width="1" height="1" fill="#ffff00"/><rect x="3" y="4" width="1" height="1" fill="#fff"/><rect x="4" y="4" width="1" height="1" fill="#00008c"/><rect x="5" y="4" width="1" height="1" fill="#00008c"/><rect x="6" y="4" width="1" height="1" fill="#ffff00"/><rect x="7" y="4" width="1" height="1" fill="#fff"/><rect x="8" y="4" width="1" height="1" fill="#00008c"/><rect x="9" y="4" width="1" height="1" fill="#00008c"/><rect x="10" y="4" width="1" height="1" fill="#ffff00"/><rect x="11" y="4" width="1" height="1" fill="#fff"/><rect x="1" y="5" width="1" height="1" fill="#fff"/><rect x="2" y="5" width="1" height="1" fill="#fff"/><rect x="3" y="5" width="1" height="1" fill="#fff"/><rect x="4" y="5" width="1" height="1" fill="#00008c"/><rect x="5" y="5" width="1" height="1" fill="#00008c"/><rect x="6" y="5" width="1" height="1" fill="#fff"/><rect x="7" y="5" width="1" height="1" fill="#fff"/><rect x="8" y="5" width="1" height="1" fill="#00008c"/><rect x="9" y="5" width="1" height="1" fill="#00008c"/><rect x="10" y="5" width="1" height="1" fill="#fff"/><rect x="11" y="5" width="1" height="1" fill="#fff"/><rect x="1" y="6" width="1" height="1" fill="#fff"/><rect x="2" y="6" width="1" height="1" fill="#ffff00"/><rect x="3" y="6" width="1" height="1" fill="#fff"/><rect x="4" y="6" width="1" height="1" fill="#fff"/><rect x="5" y="6" width="1" height="1" fill="#fff"/><rect x="6" y="6" width="1" height="1" fill="#ffff00"/><rect x="7" y="6" width="1" height="1" fill="#00008c"/><rect x="8" y="6" width="1" height="1" fill="#00008c"/><rect x="9" y="6" width="1" height="1" fill="#fff"/><rect x="10" y="6" width="1" height="1" fill="#ffff00"/><rect x="11" y="6" width="1" height="1" fill="#fff"/><rect x="1" y="7" width="1" height="1" fill="#fff"/><rect x="2" y="7" width="1" height="1" fill="#fff"/><rect x="3" y="7" width="1" height="1" fill="#fff"/><rect x="4" y="7" width="1" height="1" fill="#ffff00"/><rect x="5" y="7" width="1" height="1" fill="#fff"/><rect x="6" y="7" width="1" height="1" fill="#00008c"/><rect x="7" y="7" width="1" height="1" fill="#00008c"/><rect x="8" y="7" width="1" height="1" fill="#ffff00"/><rect x="9" y="7" width="1" height="1" fill="#fff"/><rect x="10" y="7" width="1" height="1" fill="#fff"/><rect x="11" y="7" width="1" height="1" fill="#fff"/><rect x="1" y="8" width="1" height="1" fill="#fff"/><rect x="2" y="8" width="1" height="1" fill="#ffff00"/><rect x="3" y="8" width="1" height="1" fill="#fff"/><rect x="4" y="8" width="1" height="1" fill="#fff"/><rect x="5" y="8" width="1" height="1" fill="#fff"/><rect x="6" y="8" width="1" height="1" fill="#00008c"/><rect x="7" y="8" width="1" height="1" fill="#00008c"/><rect x="8" y="8" width="1" height="1" fill="#fff"/><rect x="9" y="8" width="1" height="1" fill="#fff"/><rect x="10" y="8" width="1" height="1" fill="#ffff00"/><rect x="11" y="8" width="1" height="1" fill="#fff"/><rect x="1" y="9" width="1" height="1" fill="#fff"/><rect x="2" y="9" width="1" height="1" fill="#fff"/><rect x="3" y="9" width="1" height="1" fill="#fff"/><rect x="4" y="9" width="1" height="1" fill="#ffff00"/><rect x="5" y="9" width="1" height="1" fill="#fff"/><rect x="6" y="9" width="1" height="1" fill="#fff"/><rect x="7" y="9" width="1" height="1" fill="#fff"/><rect x="8" y="9" width="1" height="1" fill="#ffff00"/><rect x="9" y="9" width="1" height="1" fill="#fff"/><rect x="10" y="9" width="1" height="1" fill="#fff"/><rect x="11" y="9" width="1" height="1" fill="#fff"/><rect x="1" y="10" width="1" height="1" fill="#fff"/><rect x="2" y="10" width="1" height="1" fill="#ffff00"/><rect x="3" y="10" width="1" height="1" fill="#fff"/><rect x="4" y="10" width="1" height="1" fill="#fff"/><rect x="5" y="10" width="1" height="1" fill="#fff"/><rect x="6" y="10" width="1" height="1" fill="#00008c"/><rect x="7" y="10" width="1" height="1" fill="#00008c"/><rect x="8" y="10" width="1" height="1" fill="#fff"/><rect x="9" y="10" width="1" height="1" fill="#fff"/><rect x="10" y="10" width="1" height="1" fill="#ffff00"/><rect x="11" y="10" width="1" height="1" fill="#fff"/><rect x="1" y="11" width="1" height="1" fill="#fff"/><rect x="2" y="11" width="1" height="1" fill="#fff"/><rect x="3" y="11" width="1" height="1" fill="#fff"/><rect x="4" y="11" width="1" height="1" fill="#ffff00"/><rect x="5" y="11" width="1" height="1" fill="#fff"/><rect x="6" y="11" width="1" height="1" fill="#fff"/><rect x="7" y="11" width="1" height="1" fill="#fff"/><rect x="8" y="11" width="1" height="1" fill="#ffff00"/><rect x="9" y="11" width="1" height="1" fill="#fff"/><rect x="10" y="11" width="1" height="1" fill="#fff"/><rect x="11" y="11" width="1" height="1" fill="#fff"/><rect x="8" y="12" width="1" height="1" fill="#fff"/><rect x="9" y="12" width="1" height="1" fill="#fff"/><rect x="10" y="12" width="1" height="1" fill="#fff"/><rect x="9" y="13" width="1" height="1" fill="#ffff00"/><rect x="13" y="2" width="1" height="1" fill="#8c8c8c"/><rect x="13" y="3" width="1" height="1" fill="#8c8c8c"/><rect x="13" y="4" width="1" height="1" fill="#8c8c8c"/><rect x="13" y="5" width="1" height="1" fill="#8c8c8c"/><rect x="13" y="6" width="1" height="1" fill="#8c8c8c"/><rect x="13" y="7" width="1" height="1" fill="#8c8c8c"/><rect x="13" y="8" width="1" height="1" fill="#8c8c8c"/><rect x="13" y="9" width="1" height="1" fill="#8c8c8c"/><rect x="13" y="10" width="1" height="1" fill="#8c8c8c"/><rect x="13" y="11" width="1" height="1" fill="#8c8c8c"/><rect x="13" y="12" width="1" height="1" fill="#8c8c8c"/><rect x="2" y="13" width="1" height="1" fill="#8c8c8c"/><rect x="3" y="13" width="1" height="1" fill="#8c8c8c"/><rect x="4" y="13" width="1" height="1" fill="#8c8c8c"/><rect x="5" y="13" width="1" height="1" fill="#8c8c8c"/><rect x="6" y="13" width="1" height="1" fill="#8c8c8c"/><rect x="7" y="13" width="1" height="1" fill="#8c8c8c"/><rect x="11" y="14" width="1" height="1" fill="#8c8c8c"/><rect x="12" y="13" width="1" height="1" fill="#8c8c8c"/><rect x="1" y="0" width="1" height="1" fill="#000"/><rect x="2" y="0" width="1" height="1" fill="#000"/><rect x="3" y="0" width="1" height="1" fill="#000"/><rect x="4" y="0" width="1" height="1" fill="#000"/><rect x="5" y="0" width="1" height="1" fill="#000"/><rect x="6" y="0" width="1" height="1" fill="#000"/><rect x="7" y="0" width="1" height="1" fill="#000"/><rect x="8" y="0" width="1" height="1" fill="#000"/><rect x="9" y="0" width="1" height="1" fill="#000"/><rect x="10" y="0" width="1" height="1" fill="#000"/><rect x="11" y="0" width="1" height="1" fill="#000"/><rect x="0" y="1" width="1" height="1" fill="#000"/><rect x="12" y="1" width="1" height="1" fill="#000"/><rect x="0" y="2" width="1" height="1" fill="#000"/><rect x="12" y="2" width="1" height="1" fill="#000"/><rect x="0" y="3" width="1" height="1" fill="#000"/><rect x="12" y="3" width="1" height="1" fill="#000"/><rect x="0" y="4" width="1" height="1" fill="#000"/><rect x="12" y="4" width="1" height="1" fill="#000"/><rect x="0" y="5" width="1" height="1" fill="#000"/><rect x="12" y="5" width="1" height="1" fill="#000"/><rect x="0" y="6" width="1" height="1" fill="#000"/><rect x="12" y="6" width="1" height="1" fill="#000"/><rect x="0" y="7" width="1" height="1" fill="#000"/><rect x="12" y="7" width="1" height="1" fill="#000"/><rect x="0" y="8" width="1" height="1" fill="#000"/><rect x="12" y="8" width="1" height="1" fill="#000"/><rect x="0" y="9" width="1" height="1" fill="#000"/><rect x="12" y="9" width="1" height="1" fill="#000"/><rect x="0" y="10" width="1" height="1" fill="#000"/><rect x="12" y="10" width="1" height="1" fill="#000"/><rect x="0" y="11" width="1" height="1" fill="#000"/><rect x="12" y="11" width="1" height="1" fill="#000"/><rect x="1" y="12" width="1" height="1" fill="#000"/><rect x="2" y="12" width="1" height="1" fill="#000"/><rect x="3" y="12" width="1" height="1" fill="#000"/><rect x="4" y="12" width="1" height="1" fill="#000"/><rect x="5" y="12" width="1" height="1" fill="#000"/><rect x="6" y="12" width="1" height="1" fill="#000"/><rect x="7" y="12" width="1" height="1" fill="#000"/><rect x="11" y="12" width="1" height="1" fill="#000"/><rect x="8" y="13" width="1" height="1" fill="#000"/><rect x="10" y="13" width="1" height="1" fill="#000"/><rect x="9" y="14" width="1" height="1" fill="#000"/><rect x="10" y="14" width="1" height="1" fill="#000"/><rect x="10" y="15" width="1" height="1" fill="#000"/></svg>
<div class="abs" style="left:47px;top:813px;width:23px;height:26px;border:1px solid #62a3e6;background:#b5d6f4"></div>
<svg class="abs" style="left:47px;top:815px" width="22" height="22" viewBox="0 0 22 22">
<defs><pattern id="dith" width="2" height="2" patternUnits="userSpaceOnUse"><rect width="2" height="2" fill="#ffff00"/><rect x="1" y="1" width="1" height="1" fill="#fff"/></pattern></defs>
<path d="M12.45 4.2 L18.6 10.4 L13.5 15 L7.3 9.4 Z" fill="#fff" stroke="#8a8a8a" stroke-width="0.7"/>
<path d="M7.3 9.4 L11.8 13.6 M18.6 10.4 L15.2 13.6" stroke="#000" stroke-width="1"/>
<path d="M10.3 9.3 Q11.8 10.8 13.6 11.3 Q14.7 11 14.4 9.7 L13.4 7.4" fill="none" stroke="#0000c8" stroke-width="1.3"/>
<path d="M3.3 19.3 L8.5 14.4 L18.5 14.4 L13.9 19.3 Z" fill="#878700"/>
<path d="M8.5 14.5 L18 14.5" stroke="#9a9a70" stroke-width="0.8"/>
<path d="M3.8 10.8 L6.4 10.4 L11.3 14 L4.4 18.8 L3.8 18.8 Z" fill="url(#dith)" shape-rendering="crispEdges"/>
<path d="M3.5 11 V19" stroke="#909090" stroke-width="0.8"/>
<rect x="3.1" y="19" width="10.8" height="1.1" fill="#000"/>
<path d="M18.7 14.3 L13.9 19.6" stroke="#000" stroke-width="1.1"/>
</svg>
<div class="abs btn" style="left:850px;top:814px;width:90px;height:24px"></div>
<div class="t" style="left:850px;top:819px;width:90px;text-align:center"><span style="letter-spacing:-0.4px">Save and Run</span></div>
<div class="abs btn" style="left:948px;top:814px;width:86px;height:24px"></div>
<div class="t" style="left:948px;top:819px;width:86px;text-align:center">Cancel</div>
</body></html>
